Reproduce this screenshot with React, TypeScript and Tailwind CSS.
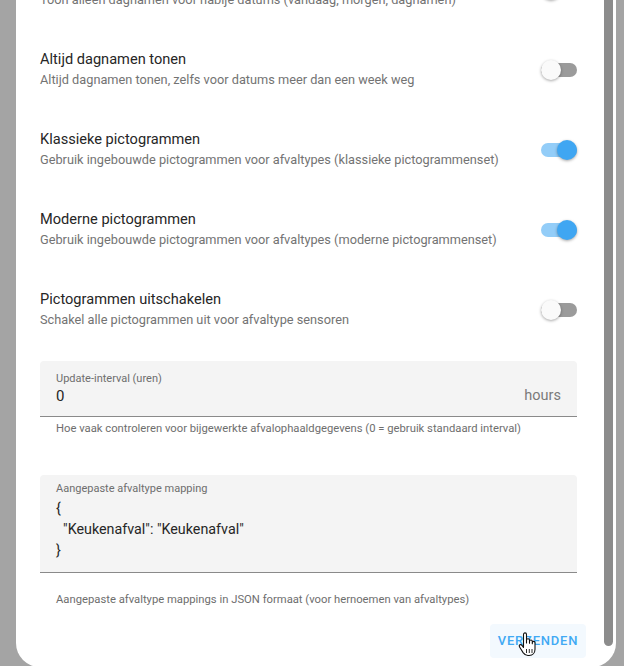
import React from "react";

const rows = [
  {
    title: "Alleen nabije dagnamen tonen",
    desc: "Toon alleen dagnamen voor nabije datums (vandaag, morgen, dagnamen)",
    on: false,
  },
  {
    title: "Altijd dagnamen tonen",
    desc: "Altijd dagnamen tonen, zelfs voor datums meer dan een week weg",
    on: false,
  },
  {
    title: "Klassieke pictogrammen",
    desc: "Gebruik ingebouwde pictogrammen voor afvaltypes (klassieke pictogrammenset)",
    on: true,
  },
  {
    title: "Moderne pictogrammen",
    desc: "Gebruik ingebouwde pictogrammen voor afvaltypes (moderne pictogrammenset)",
    on: true,
  },
  {
    title: "Pictogrammen uitschakelen",
    desc: "Schakel alle pictogrammen uit voor afvaltype sensoren",
    on: false,
  },
];

const Toggle = ({ on }: { on: boolean }) => (
  <div className="relative mt-[3px] w-9 h-5 flex items-center">
    <div
      className={
        on
          ? "w-9 h-[14px] rounded-full bg-[#93cdf8]"
          : "w-9 h-[14px] rounded-full bg-[#9b9b9b]"
      }
    />
    <div
      className={
        on
          ? "absolute top-0 left-4 w-5 h-5 rounded-full bg-[#3fa6f2] shadow-[0_1px_3px_rgba(0,0,0,0.35)]"
          : "absolute top-0 left-0 w-5 h-5 rounded-full bg-[#fafafa] shadow-[0_1px_3px_rgba(0,0,0,0.35)]"
      }
    />
  </div>
);

const HandCursor = () => (
  <svg
    width="20"
    height="28"
    viewBox="0 0 20 28"
    className="absolute left-[28px] top-[8px]"
  >
    <path
      d="M5.5 2.5c0-1 .7-1.6 1.5-1.6s1.5.6 1.5 1.6v8.5V8.2c0-.9.7-1.5 1.5-1.5s1.5.6 1.5 1.5v3V9.4c0-.9.7-1.4 1.4-1.4s1.4.5 1.4 1.4v2.3-1c0-.8.6-1.3 1.3-1.3s1.4.5 1.4 1.3v6.6c0 3.6-2.4 6.2-5.8 6.2H10c-2.2 0-3.6-1-4.9-2.9L1.6 15c-.6-.9-.4-1.8.3-2.2.7-.4 1.5-.2 2.1.6l1.5 2.1V2.5z"
      fill="#fff"
      stroke="#111"
      strokeWidth="1.1"
      strokeLinejoin="round"
    />
    <path d="M8.5 17v4M11.3 17v4M14 17v4" stroke="#111" strokeWidth="0.9" />
  </svg>
);

export default function App() {
  return (
    <div className="w-[624px] h-[666px] bg-[#a4a4a4] overflow-hidden font-['Roboto',sans-serif]">
      <div className="ml-4 w-[600px] h-[667px] bg-white rounded-b-[24px] overflow-hidden flex">
        <div className="flex-1 pl-6 pr-[27px] -mt-[52px]">
          {rows.map((r) => (
            <div key={r.title} className="h-20 flex items-center justify-between">
              <div className="flex flex-col">
                <div className="text-[14.6px] leading-5 text-[#262626]">{r.title}</div>
                <div className="mt-[3px] text-[12.75px] leading-4 text-[#737373]">
                  {r.desc}
                </div>
              </div>
              <Toggle on={r.on} />
            </div>
          ))}

          <div className="mt-[13px] h-[56px] bg-[#f4f4f4] rounded-t border-b border-[#8a8a8a] px-4 pt-[11px]">
            <div className="text-[11px] leading-[14px] text-[#6e6e6e]">
              Update-interval (uren)
            </div>
            <div className="flex justify-between items-center h-5">
              <span className="text-[15px] text-[#262626]">0</span>
              <span className="text-[14.5px] text-[#7a7a7a]">hours</span>
            </div>
          </div>
          <div className="mt-1 px-4 text-[11.25px] leading-4 text-[#6e6e6e]">
            Hoe vaak controleren voor bijgewerkte afvalophaaldgegevens (0 = gebruik
            standaard interval)
          </div>

          <div className="mt-[38px] h-[98px] bg-[#f4f4f4] rounded-t border-b border-[#8a8a8a] px-4 pt-[7px]">
            <div className="text-[11px] leading-[14px] text-[#6e6e6e]">
              Aangepaste afvaltype mapping
            </div>
            <div className="mt-[1.5px] text-[14.3px] leading-[21px] text-[#262626] whitespace-pre">
              {'{\n  "Keukenafval": "Keukenafval"\n}'}
            </div>
          </div>
          <div className="mt-[19px] px-4 text-[11.25px] leading-4 text-[#6e6e6e]">
            Aangepaste afvaltype mappings in JSON formaat (voor hernoemen van
            afvaltypes)
          </div>

          <div className="mt-4 flex justify-end -mr-[9px]">
            <div className="relative h-[34px] w-24 rounded bg-[#f3f9fe] flex items-center justify-center text-[13px] font-medium tracking-[0.8px] text-[#41a9f4]">
              VERZENDEN
              <HandCursor />
            </div>
          </div>
        </div>
        <div className="w-3 flex flex-col">
          <div className="h-[646px] w-[9px] bg-[#8c8c8c] rounded-b-full" />
        </div>
      </div>
    </div>
  );
}
